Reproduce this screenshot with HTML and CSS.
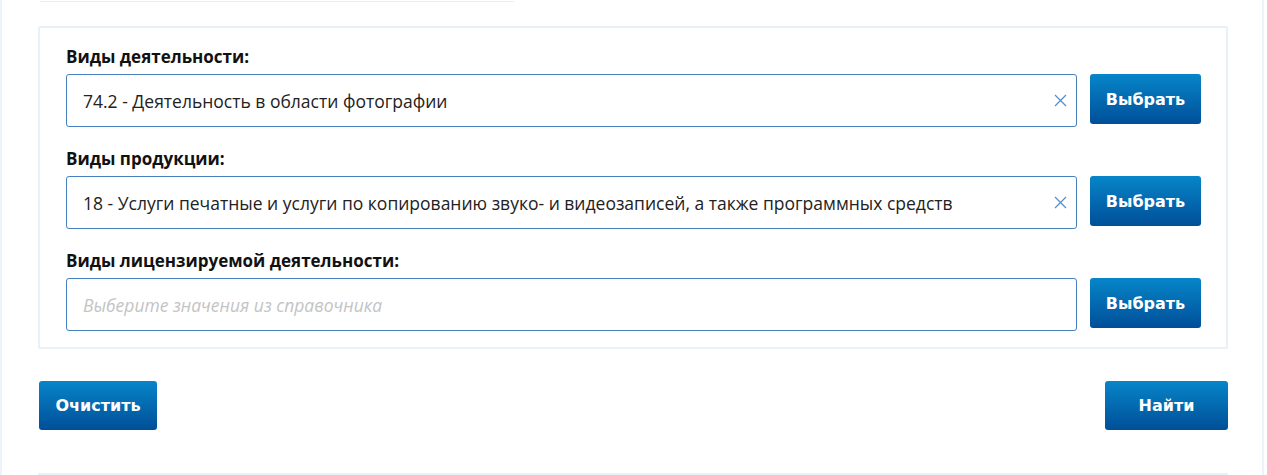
FILE: index.html
```html
<!DOCTYPE html>
<html lang="ru">
<head>
  <meta charset="UTF-8">
  <meta name="viewport" content="width=device-width, initial-scale=1.0">
  <title>Поиск</title>
  <link rel="stylesheet" href="styles.css">
</head>
<body>
  <div class="page">
    <div class="prev-box"></div>

    <div class="panel">
      <div class="field">
        <div class="label">Виды деятельности:</div>
        <div class="row">
          <div class="input">
            <span class="value">74.2 - Деятельность в области фотографии</span>
            <span class="clear">
              <svg width="13" height="13" viewBox="0 0 13 13"><path d="M1 1L12 12M12 1L1 12" stroke="#5b8ec6" stroke-width="1.3" fill="none"/></svg>
            </span>
          </div>
          <button class="btn btn-pick">Выбрать</button>
        </div>
      </div>

      <div class="field">
        <div class="label">Виды продукции:</div>
        <div class="row">
          <div class="input">
            <span class="value">18 - Услуги печатные и услуги по копированию звуко- и видеозаписей, а также программных средств</span>
            <span class="clear">
              <svg width="13" height="13" viewBox="0 0 13 13"><path d="M1 1L12 12M12 1L1 12" stroke="#5b8ec6" stroke-width="1.3" fill="none"/></svg>
            </span>
          </div>
          <button class="btn btn-pick">Выбрать</button>
        </div>
      </div>

      <div class="field">
        <div class="label">Виды лицензируемой деятельности:</div>
        <div class="row">
          <div class="input">
            <span class="placeholder">Выберите значения из справочника</span>
          </div>
          <button class="btn btn-pick">Выбрать</button>
        </div>
      </div>
    </div>

    <div class="actions">
      <button class="btn btn-clear">Очистить</button>
      <button class="btn btn-find">Найти</button>
    </div>

    <div class="next-box"></div>
  </div>
</body>
</html>
```

FILE: styles.css
```css
* {
  box-sizing: border-box;
}
body {
  margin: 0;
  background: #fff;
  font-family: "Open Sans", Arial, sans-serif;
  color: #222;
}
.page {
  width: 1264px;
  height: 475px;
  padding: 0 34px 0 36px;
  border-left: 2px solid #edf3fa;
  border-right: 2px solid #edf3fa;
  overflow: hidden;
}
.prev-box {
  width: 474px;
  height: 2px;
  margin-left: 2px;
  border-bottom: 1px solid #e6eef7;
}
.panel {
  margin-top: 24px;
  border: 2px solid #e8f0f8;
  border-radius: 2px;
  padding: 19px 25px 16px 26px;
  display: flex;
  flex-direction: column;
  gap: 22px;
}
.label {
  font-weight: 700;
  font-size: 17px;
  line-height: 20px;
  margin-bottom: 7px;
  color: #111;
}
.row {
  display: flex;
  gap: 13px;
  align-items: flex-start;
}
.input {
  flex: 1;
  height: 53px;
  border: 1px solid #4680be;
  border-radius: 3px;
  display: flex;
  align-items: center;
  padding: 0 9px 0 16px;
  font-size: 17.5px;
}
.value {
  flex: 1;
  white-space: nowrap;
  overflow: hidden;
}
.placeholder {
  color: #c4c4c4;
  font-style: italic;
}
.clear {
  display: flex;
  margin-left: 10px;
}
.btn {
  border: none;
  border-radius: 3px;
  background: linear-gradient(#0785c9, #004f98);
  color: #fff;
  font-family: "DejaVu Sans", Verdana, sans-serif;
  font-weight: 700;
  font-size: 16px;
  cursor: pointer;
  padding: 0;
}
.btn-pick {
  width: 111px;
  height: 50px;
}
.actions {
  display: flex;
  justify-content: space-between;
  margin-top: 32px;
}
.btn-clear {
  width: 118px;
  height: 49px;
  margin-left: 1px;
}
.btn-find {
  width: 123px;
  height: 49px;
}
.next-box {
  margin-top: 43px;
  height: 10px;
  border-top: 2px solid #e8f0f8;
}
```
